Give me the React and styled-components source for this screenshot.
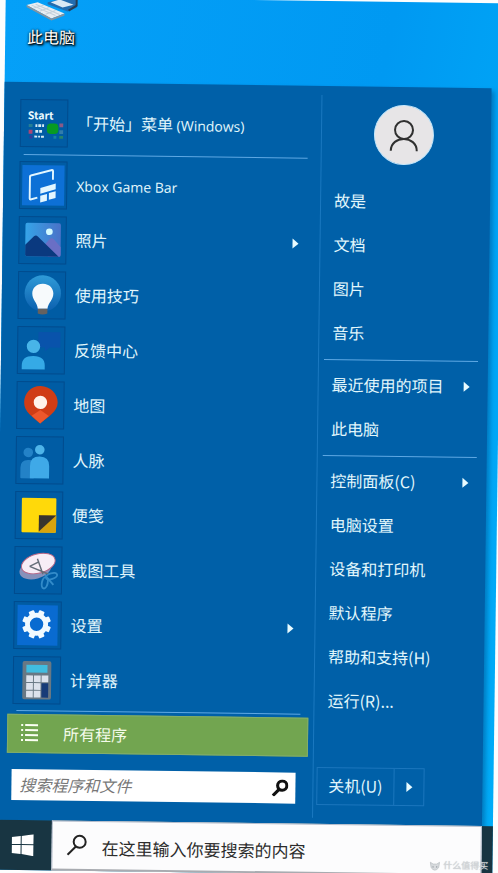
import React from "react";
import styled, { createGlobalStyle } from "styled-components";

const GlobalStyle = createGlobalStyle`
  * {
    box-sizing: border-box;
  }

  body {
    margin: 0;
    background: #fdfdfd;
    font-family: "Noto Sans CJK SC", "Open Sans", sans-serif;
    font-size: 16px;
  }

  button,
  input {
    font-family: inherit;
    font-size: inherit;
  }

  ul {
    list-style: none;
    margin: 0;
    padding: 0;
  }
`;

const Page = styled.div`
  overflow: hidden;
`;

const Desktop = styled.div`
  position: relative;
  display: flex;
  flex-direction: column;
  min-height: 100vh;
  background: linear-gradient(100deg, #05a0f8 0%, #0099f2 60%, #00adf8 100%);
  transform: rotate(0.75deg);
`;

const Shortcuts = styled.div`
  flex: 1 0 84px;
  display: flex;
  align-items: flex-start;
  padding-left: 14px;
`;

const Shortcut = styled.button`
  display: flex;
  flex-direction: column;
  align-items: center;
  width: 64px;
  padding: 0;
  border: none;
  background: none;
  color: #ffffff;
  line-height: 22px;
  text-shadow: 1px 1px 2px #000, 1px 1px 3px #000, 0 0 2px #012;

  svg {
    width: 56px;
    height: 28px;
  }
`;

const Menu = styled.div`
  display: grid;
  grid-template-columns: minmax(0, 317fr) minmax(0, 170fr);
  margin-right: 11px;
  background: #0060a8;
  box-shadow: 3px 3px 4px rgba(0, 70, 130, 0.45);
`;

const Programs = styled.div`
  padding: 17px 5px 20px 11px;
`;

const Places = styled.div`
  display: flex;
  flex-direction: column;
  margin: 9px 0 6px;
  padding: 9px 10px 13px 5px;
  border-left: 1px solid #1a78c0;
`;

const ProgramList = styled.ul`
  display: flex;
  flex-direction: column;
  gap: 7px;
  padding: 0 16px 0 5px;
`;

const Program = styled.button`
  display: flex;
  align-items: center;
  gap: 9px;
  width: 100%;
  height: 48px;
  padding: 0;
  border: none;
  background: none;
  color: #e2f7fc;
  text-align: left;
  white-space: nowrap;
`;

const Tile = styled.span`
  flex: none;
  width: 48px;
  height: 48px;
  border: 1px solid #004c8e;
  background: #005ca4;

  svg {
    display: block;
    width: 46px;
    height: 46px;
  }
`;

const Label = styled.span`
  flex: 1;
  padding-bottom: 2px;
`;

const Latin = styled.span`
  font-family: "Open Sans", sans-serif;
  font-size: 14px;
`;

const Arrow = styled.span`
  width: 0;
  height: 0;
  border: 5px solid transparent;
  border-left: 6px solid #e8fbff;
  border-right: none;
`;

const Line = styled.hr`
  width: auto;
  height: 1px;
  margin: ${(p) => p.$margin};
  border: none;
  background: #5fa9e4;
`;

const AllPrograms = styled.button`
  display: flex;
  align-items: center;
  gap: 25px;
  width: 100%;
  height: 39px;
  padding: 0 12px 2px;
  border: 1px solid #83ad6c;
  background: #72a550;
  color: #f4fbe9;
  text-align: left;

  svg {
    width: 18px;
    height: 20px;
  }
`;

const SearchForm = styled.form`
  display: flex;
  align-items: center;
  height: 31px;
  margin: 16px 12px 0 5px;
  background: #ffffff;
`;

const SearchInput = styled.input`
  flex: 1;
  min-width: 0;
  height: 100%;
  padding: 0 8px 2px;
  border: none;
  background: none;
  font-style: italic;

  &::placeholder {
    color: #777777;
    opacity: 1;
  }
`;

const SearchButton = styled.button`
  display: flex;
  padding: 0 7px;
  border: none;
  background: none;

  svg {
    width: 17px;
    height: 17px;
  }
`;

const Avatar = styled.button`
  align-self: center;
  width: 60px;
  height: 60px;
  margin-bottom: 15px;
  padding: 0;
  border: 1px solid #c3e6fb;
  border-radius: 50%;
  background: #e7e5e7;

  svg {
    display: block;
    width: 58px;
    height: 58px;
  }
`;

const Place = styled.button`
  display: flex;
  align-items: center;
  width: 100%;
  height: 44px;
  padding: 0 8px;
  border: none;
  background: none;
  color: #e2f7fc;
  text-align: left;
  white-space: nowrap;
`;

const Power = styled.div`
  display: flex;
  width: 108px;
  height: 38px;
  margin-top: auto;
  margin-left: -2px;
  border: 1px solid #1b76bd;
`;

const PowerButton = styled.button`
  flex: 1;
  padding: 0 0 2px;
  border: none;
  background: none;
  color: #e2f7fc;
  white-space: nowrap;
`;

const PowerMore = styled.button`
  display: flex;
  align-items: center;
  justify-content: center;
  width: 30px;
  padding: 0;
  border: none;
  border-left: 1px solid #1b76bd;
  background: none;
`;

const Taskbar = styled.div`
  display: flex;
  height: 50px;
  padding-right: 11px;
  background: #183542;
`;

const StartButton = styled.button`
  width: 57px;
  padding: 4px 14px 0 12px;
  border: none;
  background: none;

  svg {
    width: 22px;
    height: 22px;
  }
`;

const TaskSearch = styled.label`
  flex: 1;
  display: flex;
  align-items: center;
  gap: 14px;
  padding: 3px 0 0 13px;
  border: 1px solid #b3bccb;
  border-bottom: 2px solid #a8abb0;
  background: #fcfcfd;

  svg {
    width: 22px;
    height: 22px;
    margin-bottom: 4px;
  }

  input {
    flex: 1;
    min-width: 0;
    height: 30px;
    padding: 0;
    border: none;
    background: none;
    font-size: 17px;
  }

  input::placeholder {
    color: #2c2c2c;
    opacity: 1;
  }
`;

const Watermark = styled.span`
  position: absolute;
  right: 4px;
  bottom: 3px;
  display: flex;
  align-items: center;
  gap: 3px;
  color: #d3d6d9;
  font-size: 9px;
  line-height: 14px;
  text-shadow: 0 0 1px #b4b9be;

  svg {
    width: 11px;
    height: 11px;
  }
`;

const ComputerIcon = () => (
  <svg viewBox="0 0 56 28" aria-hidden="true">
    <path d="M24 5 53 -2V10L44 14 24 7Z" fill="#236db0" />
    <path d="M53 -2V8L45 13" fill="none" stroke="#253c54" strokeWidth="2" />
    <path d="M27 5 36 2 50 7 39 10Z" fill="#dbe9f5" />
    <path d="M3 8 14 5 41 16 28 21Z" fill="#e8edf2" />
    <path d="M3 8V10L28 23 41 18V16L28 21Z" fill="#85939f" />
    <path d="M8 8 32 18M12 7 36 17M10 11 20 8M16 14 26 10M22 17 32 13" stroke="#c3d0da" strokeWidth="1" />
  </svg>
);

const StartMenuIcon = () => (
  <svg viewBox="0 0 48 48" aria-hidden="true">
    <text x="7" y="20" fill="#ecfaff" fontSize="11" fontWeight="600" fontFamily="Noto Sans CJK SC, sans-serif">
      Start
    </text>
    <g fill="#d6ebf5">
      <path d="M15 25h2v3h-2zM18 25h3v3h-3zM22 25h2v3h-2zM15 31h3v3h-3zM19 31h3v3h-3zM14 37h3v2h-3zM18 37h2v2h-2zM21 37h3v2h-3z" />
    </g>
    <rect x="27" y="24" width="12" height="11" rx="4" fill="#079b24" />
    <rect x="8" y="25" width="4" height="3" fill="#247e96" />
    <rect x="8" y="31" width="4" height="4" fill="#aa4575" />
    <rect x="9" y="37" width="3" height="3" fill="#353899" />
    <rect x="40" y="24" width="4" height="4" fill="#8a5a86" />
    <rect x="40" y="31" width="4" height="4" fill="#327cab" />
    <rect x="34" y="37" width="3" height="3" fill="#1382a5" />
    <rect x="40" y="37" width="4" height="3" fill="#26836d" />
  </svg>
);

const XboxIcon = () => (
  <svg viewBox="0 0 48 48" aria-hidden="true">
    <rect x="2" y="3" width="44" height="42" fill="#0d70d6" />
    <path d="M18 37 11 39Q10 39 10 38V16Q10 14 11 14L33 8Q34 8 34 9V18" fill="none" stroke="#e3f6ff" strokeWidth="2" />
    <path d="M21 27 37 22V28L21 33ZM21 35 28 33V40L21 42ZM30 32 37 30V37L30 39Z" fill="#e3f6ff" />
  </svg>
);

const PhotosIcon = () => (
  <svg viewBox="0 0 48 48" aria-hidden="true">
    <defs>
      <linearGradient id="photoSky" x1="0" y1="0" x2="1" y2="0">
        <stop offset="0" stopColor="#35a4e8" />
        <stop offset="1" stopColor="#4a72c8" />
      </linearGradient>
    </defs>
    <rect x="6" y="6" width="37" height="35" rx="2" fill="url(#photoSky)" />
    <path d="M24 31 32 22Q34 21 36 23L43 31V39Q43 41 41 41H30Z" fill="#6a6fc5" />
    <path d="M6 29 15 20Q17 18 19 20L41 41H8Q6 41 6 39Z" fill="#0a397f" />
    <circle cx="31" cy="15" r="3.5" fill="#d4fbff" />
  </svg>
);

const TipsIcon = () => (
  <svg viewBox="0 0 48 48" aria-hidden="true">
    <defs>
      <linearGradient id="tipDisc" x1="0" y1="0" x2="0" y2="1">
        <stop offset="0" stopColor="#2f9bd8" />
        <stop offset="1" stopColor="#0b5fae" />
      </linearGradient>
    </defs>
    <circle cx="25" cy="22" r="19" fill="url(#tipDisc)" />
    <path d="M25 12C18 12 14 17 14 22C14 29 19 31 20 38H30C31 31 36 29 36 22C36 17 32 12 25 12Z" fill="#f7fafc" />
    <path d="M20 38H30V43Q25 45 20 43Z" fill="#65615f" />
  </svg>
);

const FeedbackIcon = () => (
  <svg viewBox="0 0 48 48" aria-hidden="true">
    <path d="M21 5H44V21H33L28 25V21H21Z" fill="#0953ab" />
    <circle cx="16" cy="20" r="7" fill="#48b4e8" />
    <path d="M4 44V40Q4 30 16 30T28 40V44Z" fill="#35aae6" />
  </svg>
);

const MapsIcon = () => (
  <svg viewBox="0 0 48 48" aria-hidden="true">
    <path d="M24 4C14 4 7 12 7 21C7 31 16 36 24 43C32 36 42 31 42 21C42 12 34 4 24 4Z" fill="#d03d16" />
    <path d="M15 35 24 29 33 35 24 43Z" fill="#ee572b" />
    <circle cx="24" cy="21" r="7" fill="#fff3ea" />
  </svg>
);

const PeopleIcon = () => (
  <svg viewBox="0 0 48 48" aria-hidden="true">
    <circle cx="12" cy="16" r="5" fill="#2382c7" />
    <path d="M4 42V32Q4 24 12 24H18V43H5Q4 43 4 42Z" fill="#2382c7" />
    <circle cx="24" cy="13" r="5" fill="#4eb4e9" />
    <path d="M14 43V30Q14 20 24 20T34 30V43Z" fill="#3fa9e8" />
  </svg>
);

const NotesIcon = () => (
  <svg viewBox="0 0 48 48" aria-hidden="true">
    <rect x="6" y="6" width="36" height="36" rx="1" fill="#ffd90a" />
    <path d="M24 24H42V41L40 42H24Z" fill="#d8a30d" />
    <path d="M24 24H42L24 41Z" fill="#38342e" />
  </svg>
);

const SnipIcon = () => (
  <svg viewBox="0 0 48 48" aria-hidden="true">
    <ellipse cx="21" cy="23" rx="17" ry="10" transform="rotate(-16 21 23)" fill="#8791ba" />
    <ellipse cx="24" cy="17" rx="18" ry="10" transform="rotate(-16 24 17)" fill="#f7edf6" stroke="#ba6786" strokeWidth="1" />
    <path d="M23 12 29 28M15 20 35 28M15 20 25 15" stroke="#656d78" strokeWidth="1.5" fill="none" />
    <ellipse cx="38" cy="30" rx="6" ry="3" transform="rotate(-18 38 30)" fill="none" stroke="#328bc9" strokeWidth="2" />
    <ellipse cx="31" cy="37" rx="3" ry="6" transform="rotate(12 31 37)" fill="none" stroke="#328bc9" strokeWidth="2" />
    <path d="M31 29 40 39" stroke="#328bc9" strokeWidth="2" />
  </svg>
);

const SettingsIcon = () => (
  <svg viewBox="0 0 48 48" aria-hidden="true">
    <rect x="3" y="3" width="42" height="42" fill="#096bd1" />
    <g fill="#f1faff">
      {[0, 45, 90, 135].map((angle) => (
        <rect key={angle} x="20" y="8" width="6" height="30" rx="1" transform={`rotate(${angle + 22} 23 23)`} />
      ))}
      <circle cx="23" cy="23" r="12" />
    </g>
    <circle cx="23" cy="23" r="7" fill="#096bd1" />
  </svg>
);

const CalculatorIcon = () => (
  <svg viewBox="0 0 48 48" aria-hidden="true">
    <rect x="9" y="4" width="30" height="40" rx="2" fill="#687884" />
    <rect x="13" y="8" width="22" height="8" fill="#40bde0" />
    <g fill="#dce2ec">
      {[19, 27, 35].map((y) =>
        [13, 21].map((x) => <rect key={`${x}-${y}`} x={x} y={y} width="7" height="7" />)
      )}
      <rect x="29" y="19" width="7" height="7" />
    </g>
    <rect x="29" y="27" width="7" height="15" fill="#173c78" />
  </svg>
);

const ListIcon = () => (
  <svg viewBox="0 0 18 20" aria-hidden="true">
    <path
      d="M5 2H18M5 7H18M5 12H18M5 17H18M1 2H3M1 7H3M1 12H3M1 17H3"
      stroke="#fbfff3"
      strokeWidth="2"
    />
  </svg>
);

const SearchIcon = ({ color, weight }) => (
  <svg viewBox="0 0 22 22" aria-hidden="true">
    <circle cx="14" cy="8" r="6" fill="none" stroke={color} strokeWidth={weight} />
    <path d="M10 13 2 21" stroke={color} strokeWidth={weight} />
  </svg>
);

const UserIcon = () => (
  <svg viewBox="0 0 58 58" aria-hidden="true">
    <g fill="none" stroke="#303030" strokeWidth="2">
      <circle cx="29" cy="24" r="9" />
      <path d="M16 45C16 29 42 29 42 45" />
    </g>
  </svg>
);

const WindowsIcon = () => (
  <svg viewBox="0 0 22 22" aria-hidden="true">
    <path d="M0 3 9 2V10H0ZM10 2 22 0V10H10ZM0 11H9V20L0 19ZM10 11H22V22L10 20Z" fill="#fff" />
  </svg>
);

const programs = [
  { latin: "Xbox Game Bar", Icon: XboxIcon },
  { name: "照片", Icon: PhotosIcon, more: true },
  { name: "使用技巧", Icon: TipsIcon },
  { name: "反馈中心", Icon: FeedbackIcon },
  { name: "地图", Icon: MapsIcon },
  { name: "人脉", Icon: PeopleIcon },
  { name: "便笺", Icon: NotesIcon },
  { name: "截图工具", Icon: SnipIcon },
  { name: "设置", Icon: SettingsIcon, more: true },
  { name: "计算器", Icon: CalculatorIcon },
];

const placeGroups = [
  [{ name: "故是" }, { name: "文档" }, { name: "图片" }, { name: "音乐" }],
  [{ name: "最近使用的项目", more: true }, { name: "此电脑" }],
  [
    { name: "控制面板(C)", more: true },
    { name: "电脑设置" },
    { name: "设备和打印机" },
    { name: "默认程序" },
    { name: "帮助和支持(H)" },
    { name: "运行(R)..." },
  ],
];

const ProgramRow = ({ name, latin, Icon, more }) => (
  <Program type="button">
    <Tile>
      <Icon />
    </Tile>
    <Label>
      {name}
      {latin && <Latin>{latin}</Latin>}
    </Label>
    {more && <Arrow />}
  </Program>
);

const App = () => {
  return (
    <Page>
      <GlobalStyle />
      <Desktop>
        <Shortcuts>
          <Shortcut type="button">
            <ComputerIcon />
            此电脑
          </Shortcut>
        </Shortcuts>

        <Menu>
          <Programs>
            <ProgramList>
              <li>
                <ProgramRow name="「开始」菜单 " latin="(Windows)" Icon={StartMenuIcon} />
              </li>
            </ProgramList>
            <Line $margin="7px 8px 6px 9px" />
            <ProgramList>
              {programs.map((program) => (
                <li key={program.name || program.latin}>
                  <ProgramRow {...program} />
                </li>
              ))}
            </ProgramList>
            <Line $margin="6px 8px 3px 9px" />
            <AllPrograms type="button">
              <ListIcon />
              所有程序
            </AllPrograms>
            <SearchForm onSubmit={(e) => e.preventDefault()}>
              <SearchInput type="text" aria-label="搜索程序和文件" placeholder="搜索程序和文件" />
              <SearchButton type="submit" aria-label="搜索">
                <SearchIcon color="#111" weight="4" />
              </SearchButton>
            </SearchForm>
          </Programs>

          <Places>
            <Avatar type="button" aria-label="故是">
              <UserIcon />
            </Avatar>
            {placeGroups.map((group, index) => (
              <React.Fragment key={index}>
                {index > 0 && <Line $margin="4px 0 3px" />}
                <ul>
                  {group.map((place) => (
                    <li key={place.name}>
                      <Place type="button">
                        <Label>{place.name}</Label>
                        {place.more && <Arrow />}
                      </Place>
                    </li>
                  ))}
                </ul>
              </React.Fragment>
            ))}
            <Power>
              <PowerButton type="button">关机(U)</PowerButton>
              <PowerMore type="button" aria-label="电源选项">
                <Arrow />
              </PowerMore>
            </Power>
          </Places>
        </Menu>

        <Taskbar>
          <StartButton type="button" aria-label="开始">
            <WindowsIcon />
          </StartButton>
          <TaskSearch>
            <SearchIcon color="#222" weight="2" />
            <input type="text" aria-label="在这里输入你要搜索的内容" placeholder="在这里输入你要搜索的内容" />
          </TaskSearch>
        </Taskbar>

        <Watermark>
          <svg viewBox="0 0 12 12" aria-hidden="true">
            <path d="M1 2 4 4H8L11 2 10 8Q6 13 2 8Z" fill="#d8dbde" stroke="#c0c5c9" />
            <path d="M4 6V8M8 6V8" stroke="#9aa1a7" />
          </svg>
          什么值得买
        </Watermark>
      </Desktop>
    </Page>
  );
};

export default App;
